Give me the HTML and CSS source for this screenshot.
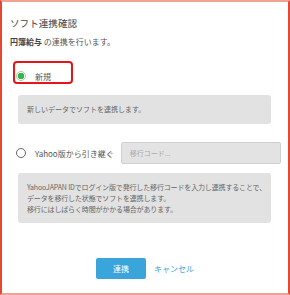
FILE: index.html
```html
<!DOCTYPE html>
<html lang="ja">
<head>
  <meta charset="UTF-8" />
  <title>ソフト連携確認</title>
  <link rel="stylesheet" href="styles.css">
</head>
<body>

  <div class="frame">
    <div class="dialog">
      <h1 class="title">ソフト連携確認</h1>
      <p class="lead"><b>円簿給与</b> の連携を行います。</p>

      <label class="option option-new">
        <span class="radio checked"></span>
        <span class="option-label">新規</span>
      </label>
      <div class="note note-short">新しいデータでソフトを連携します。</div>

      <label class="option option-yahoo">
        <span class="radio"></span>
        <span class="option-label">Yahoo版から引き継ぐ</span>
        <input class="code-input" type="text" placeholder="移行コード...">
      </label>
      <div class="note note-long">
        YahooJAPAN IDでログイン版で発行した移行コードを入力し連携することで、<br>
        データを移行した状態でソフトを連携します。<br>
        移行にはしばらく時間がかかる場合があります。
      </div>

      <div class="actions">
        <button class="btn-primary">連携</button>
        <a class="btn-link" href="#">キャンセル</a>
      </div>
    </div>
  </div>

</body>
</html>
```

FILE: styles.css
```css
html, body {
  margin: 0;
  padding: 0;
  background: white;
}
body {
  font-family: "Noto Sans CJK JP", "Noto Sans", sans-serif;
  color: #555;
}
.frame {
  box-sizing: border-box;
  width: 290px;
  height: 295px;
  border-left: 2px solid #e8462e;
  border-right: 2px solid #e8462e;
  border-top: 2px solid #f2a293;
  border-bottom: 2px solid #f2a293;
}
.dialog {
  padding: 14px 0 0 8px;
}
.title {
  margin: 0;
  font-size: 9.6px;
  line-height: 14px;
  font-weight: normal;
  color: #444;
}
.lead {
  margin: 6px 0 0;
  font-size: 8px;
  line-height: 12px;
  color: #555;
}
.lead b {
  color: #444;
}
.option {
  display: flex;
  align-items: center;
  font-size: 8px;
  color: #555;
}
.option-new {
  box-sizing: border-box;
  width: 60px;
  height: 23px;
  margin: 13px 0 0 3px;
  padding: 7px 0 0 1px;
  border: 2px solid #e8141c;
  border-radius: 4px;
}
.option-yahoo {
  height: 22px;
  margin: 18px 0 0 6px;
}
.radio {
  box-sizing: border-box;
  width: 10px;
  height: 10px;
  border: 1.5px solid #666;
  border-radius: 50%;
  flex-shrink: 0;
}
.radio.checked {
  border: 1px solid #9ccf9f;
  background: radial-gradient(circle, #3bb24b 0 3px, white 3.4px);
}
.option-label {
  margin-left: 9px;
}
.code-input {
  box-sizing: border-box;
  width: 160px;
  height: 22px;
  margin-left: 7px;
  padding: 0 8px;
  border: 1px solid #cfcfcf;
  border-radius: 2px;
  background: #e3e3e3;
  font-family: inherit;
  font-size: 7px;
  outline: none;
}
.code-input::placeholder {
  color: #aaa;
}
.note {
  box-sizing: border-box;
  width: 253px;
  margin-left: 8px;
  padding: 0 9px;
  background: #e2e2e2;
  border-radius: 3px;
  font-size: 7px;
  color: #666;
}
.note-short {
  height: 29px;
  margin-top: 11px;
  line-height: 29px;
}
.note-long {
  margin-top: 9px;
  padding-top: 8.5px;
  padding-bottom: 8.5px;
  line-height: 11px;
  white-space: nowrap;
  letter-spacing: -0.15px;
}
.actions {
  display: flex;
  justify-content: center;
  align-items: center;
  gap: 8px;
  margin: 35px 0 0 -8px;
}
.btn-primary {
  width: 50px;
  height: 21px;
  border: none;
  border-radius: 2px;
  background: #3aa5db;
  color: white;
  font-family: inherit;
  font-size: 8px;
}
.btn-link {
  color: #3aa5db;
  font-size: 8px;
  text-decoration: none;
}
```
